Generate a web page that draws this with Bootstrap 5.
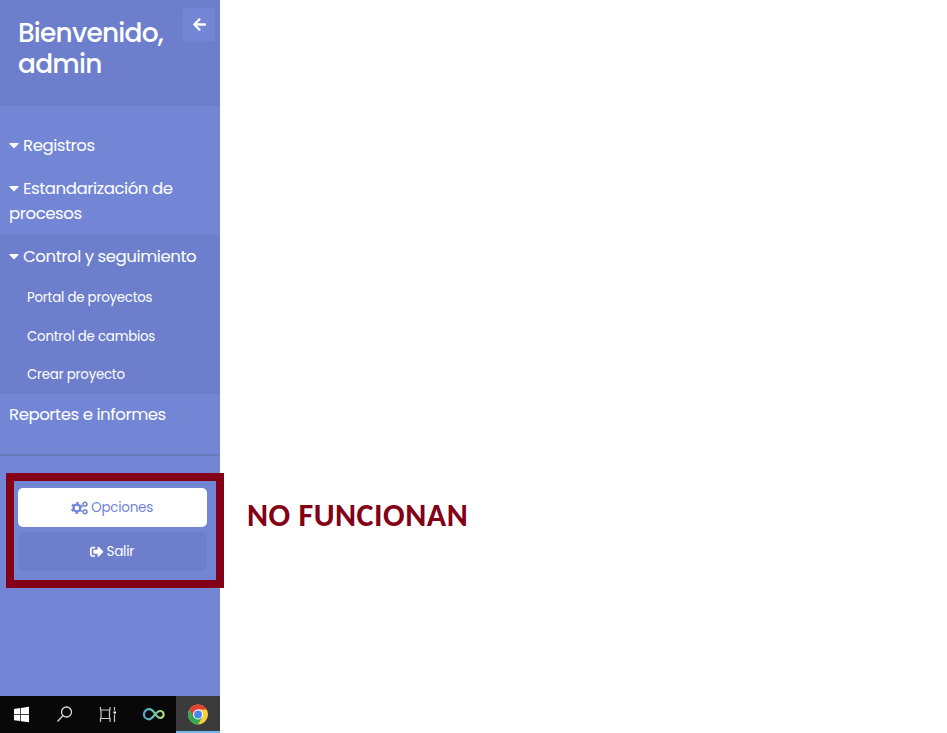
<!DOCTYPE html>
<html lang="es">
<head>
<meta charset="utf-8">
<meta name="viewport" content="width=device-width, initial-scale=1">
<title>Panel de administración</title>
<link href="https://cdn.jsdelivr.net/npm/bootstrap@5.3.0/dist/css/bootstrap.min.css" rel="stylesheet">
<style>
body{font-family:Poppins,Inter,sans-serif;background:#fff;color:#fff}
.side{width:220px;height:733px;background:#7386d5}
.side-head{height:105.5px;background:#6d7fcc;padding:17px 5px 0 18px}
.side-head h3{font-size:26.4px;line-height:31px;letter-spacing:-.76px;font-weight:500;margin:0;width:150px}
.toggle{width:32px;height:33px;background:#7386d5;margin-top:-9px;border-radius:2px;padding:0}
.menu{padding:18.5px 0 18px;border-bottom:2px solid #687cb8;height:350.5px}
.menu a{color:#fff;text-decoration:none;display:block}
.item{font-size:16.6px;line-height:24.75px;padding:10.2px 9px 8.2px;letter-spacing:-.46px}
.item.last{padding-top:8.8px}
.item svg{width:10px;height:16px;margin-right:4px;vertical-align:-2px}
.open{background:#6d7fcc}
.sub{font-size:13.3px;line-height:20.2px;padding:10px 27px 8.4px;letter-spacing:-.2px}
.actions{padding:32px 13px 0 18px;gap:5px}
.action{height:39px;border-radius:5px;font-size:13.6px;letter-spacing:-.3px;border:0;padding:0 1px 0 0;gap:3px}
.action span{padding-top:2px}
.action-light,.action-light:hover{background:#fff;color:#7386d5}
.action-dark,.action-dark:hover{background:#6d7fcc;color:#fff}
.frame{left:6px;top:473px;width:218px;height:115px;border:8px solid #830016;pointer-events:none}
.note{left:247px;top:497px;font:700 32px/38px Calibri,Carlito,Lato,sans-serif;letter-spacing:.5px;color:#830016;white-space:nowrap}
.taskbar{height:37px;background:#080808}
.taskbar>div{width:44px;height:37px}
.taskbar .active-app{background:#3b3b3b;border-bottom:2px solid #76b9ed}
</style>
<script defer src="https://cdn.jsdelivr.net/npm/bootstrap@5.3.0/dist/js/bootstrap.bundle.min.js"></script>
</head>
<body class="overflow-hidden position-relative">
<nav class="side d-flex flex-column">
  <header class="side-head d-flex justify-content-between align-items-start">
    <h3>Bienvenido,<br>admin</h3>
    <button class="btn toggle d-flex align-items-center justify-content-center" aria-label="Ocultar">
      <svg width="13" height="15" viewBox="0 0 448 512" fill="#fff"><path d="M257.5 445.1l-22.2 22.2c-9.4 9.4-24.6 9.4-33.9 0L7 273c-9.4-9.4-9.4-24.6 0-33.9L201.4 44.7c9.4-9.4 24.6-9.4 33.9 0l22.2 22.2c9.5 9.5 9.3 25-.4 34.3L136.6 216H424c13.3 0 24 10.7 24 24v32c0 13.3-10.7 24-24 24H136.6l120.5 114.8c9.8 9.3 10 24.8.4 34.3z"/></svg>
    </button>
  </header>
  <ul class="menu list-unstyled mb-0">
    <li><a class="item" href="#"><svg viewBox="0 0 320 512" fill="#fff"><path d="M31.3 192h257.3c17.8 0 26.7 21.5 14.1 34.1L174.1 354.8c-7.8 7.8-20.5 7.8-28.3 0L17.2 226.1C4.6 213.5 13.5 192 31.3 192z"/></svg>Registros</a></li>
    <li><a class="item" href="#"><svg viewBox="0 0 320 512" fill="#fff"><path d="M31.3 192h257.3c17.8 0 26.7 21.5 14.1 34.1L174.1 354.8c-7.8 7.8-20.5 7.8-28.3 0L17.2 226.1C4.6 213.5 13.5 192 31.3 192z"/></svg>Estandarización de<br>procesos</a></li>
    <li class="open"><a class="item" href="#"><svg viewBox="0 0 320 512" fill="#fff"><path d="M31.3 192h257.3c17.8 0 26.7 21.5 14.1 34.1L174.1 354.8c-7.8 7.8-20.5 7.8-28.3 0L17.2 226.1C4.6 213.5 13.5 192 31.3 192z"/></svg>Control y seguimiento</a>
      <ul class="list-unstyled mb-0">
        <li><a class="sub" href="#">Portal de proyectos</a></li>
        <li><a class="sub" href="#">Control de cambios</a></li>
        <li><a class="sub" href="#">Crear proyecto</a></li>
      </ul>
    </li>
    <li><a class="item last" href="#">Reportes e informes</a></li>
  </ul>
  <div class="actions d-flex flex-column flex-grow-1">
    <button class="btn action action-light d-flex align-items-center justify-content-center">
      <svg width="17" height="14" viewBox="0 0 17 14" fill="none" stroke="#7386d5"><circle cx="5.9" cy="7" r="3.4" stroke-width="2.4"/><circle cx="5.9" cy="7" r="5.1" stroke-width="1.6" stroke-dasharray="2.7 2.64" stroke-dashoffset="1.35" transform="rotate(30 5.9 7)"/><g stroke-width="1.4"><circle cx="14" cy="3.2" r="1.8"/><circle cx="14" cy="10.8" r="1.8"/></g><g stroke-width=".8"><circle cx="14" cy="3.2" r="2.6" stroke-dasharray="1.3 1.42"/><circle cx="14" cy="10.8" r="2.6" stroke-dasharray="1.3 1.42"/></g></svg>
      <span>Opciones</span></button>
    <button class="btn action action-dark d-flex align-items-center justify-content-center">
      <svg width="13.5" height="13.5" viewBox="0 0 512 512" fill="#fff"><path d="M497 273L329 441c-15 15-41 4.5-41-17v-96H152c-13.3 0-24-10.7-24-24v-96c0-13.3 10.7-24 24-24h136V88c0-21.4 25.9-32 41-17l168 168c9.3 9.4 9.3 24.6 0 34zM192 436v-40c0-6.6-5.4-12-12-12H96c-17.7 0-32-14.3-32-32V160c0-17.7 14.3-32 32-32h84c6.6 0 12-5.4 12-12V76c0-6.6-5.4-12-12-12H96c-53 0-96 43-96 96v192c0 53 43 96 96 96h84c6.6 0 12-5.4 12-12z"/></svg>
      <span>Salir</span></button>
  </div>
  <footer class="taskbar d-flex">
    <div><svg width="44" height="37" fill="#fff"><path d="M14 13l6.3-.9v6.1H14zM21 12l8-1.2v7.4h-8zM14 19h6.3v6.1l-6.3-.9zM21 19h8v7.3L21 25.2z"/></svg></div>
    <div><svg width="44" height="37" fill="none" stroke="#d8d8d8" stroke-width="1.3"><circle cx="22.5" cy="16" r="5"/><path d="M18.8 19.7L13.5 25.5"/></svg></div>
    <div><svg width="44" height="37" fill="none" stroke="#c8c8c8" stroke-width="1.2"><path d="M12.500 11v3h9.500v-3M12.500 26v-3.500h9.500V26M13 14v8.500M21.500 14v8.500M26.500 11v3.500M26.500 18.500V26"/><path d="M25.500 16.500h2.500" stroke="#fff" stroke-width="2"/></svg></div>
    <div><svg width="44" height="37" fill="none" stroke="url(#inf)" stroke-width="2.2"><defs><linearGradient id="inf" gradientUnits="userSpaceOnUse" x1="11" y1="18" x2="32" y2="18"><stop stop-color="#4fa8cf"/><stop offset=".5" stop-color="#67c4b5"/><stop offset="1" stop-color="#b9dd72"/></linearGradient></defs><path d="M23 17.500C21 14.500 19.500 13.200 17 13.200a5 5 0 0 0 0 10.100c4.500 0 6-8.300 11.200-8.300a3.300 3.300 0 0 1 0 6.900c-2.400 0-3.700-1.900-5.200-4.400z"/></svg></div>
    <div class="active-app"><svg width="44" height="35"><circle cx="22" cy="18.500" r="10" fill="#fbcf3d"/><path d="M22 18.500L13.340 13.500A10 10 0 0 0 22 28.500L26.330 21z" fill="#35a853"/><path d="M13.340 13.500A10 10 0 0 1 30.660 13.500H22L17.670 21z" fill="#df4436"/><circle cx="22" cy="18.500" r="5" fill="#fff"/><circle cx="22" cy="18.500" r="3.900" fill="#4688ee"/></svg></div>
  </footer>
</nav>
<div class="frame position-absolute"></div>
<div class="note position-absolute">NO FUNCIONAN</div>
</body>
</html>
